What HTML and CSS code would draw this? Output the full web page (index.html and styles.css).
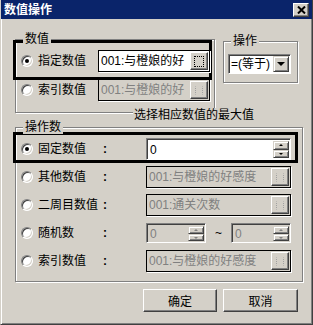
FILE: index.html
```html
<!DOCTYPE html>
<html lang="zh">
<head>
    <meta charset="UTF-8">
    <title>数值操作</title>
    <link rel="stylesheet" href="styles.css">
</head>
<body>
    <div class="window">
        <div class="titlebar">
            <span class="title">数值操作</span>
            <span class="close-btn">
                <svg width="9" height="8" viewBox="0 0 9 8"><path d="M1 0.5 L8 7.5 M8 0.5 L1 7.5" stroke="#000" stroke-width="2"/></svg>
            </span>
        </div>

        <div class="top-row">
            <!-- 数值 -->
            <div class="group group-value">
                <span class="group-label">数值</span>
                <div class="opt-row">
                    <span class="focus-frame frame-value"></span>
                    <span class="radio checked"></span>
                    <span class="opt-label">指定数值</span>
                    <div class="field picker">
                        <span class="field-text">001:与橙娘的好</span>
                        <span class="dots-btn"><span class="dots"></span></span>
                    </div>
                </div>
                <div class="opt-row">
                    <span class="radio"></span>
                    <span class="opt-label">索引数值</span>
                    <div class="field picker disabled">
                        <span class="field-text">001:与橙娘的好</span>
                        <span class="dots-btn"><span class="dots"></span></span>
                    </div>
                </div>
            </div>

            <!-- 操作 -->
            <div class="group group-op">
                <span class="group-label">操作</span>
                <div class="combo">
                    <span class="combo-text">=(等于)</span>
                    <span class="combo-btn"><span class="arrow-down"></span></span>
                </div>
            </div>
        </div>

        <div class="hint">选择相应数值的最大值</div>

        <!-- 操作数 -->
        <div class="group group-operand">
            <span class="group-label">操作数</span>
            <div class="opt-row">
                <span class="focus-frame frame-operand"></span>
                <span class="radio checked"></span>
                <span class="opt-label">固定数值</span>
                <span class="colon">:</span>
                <div class="spin wide">
                    <span class="spin-text">0</span>
                    <span class="spin-btns"><span class="spin-up"></span><span class="spin-down"></span></span>
                </div>
            </div>
            <div class="opt-row">
                <span class="radio"></span>
                <span class="opt-label">其他数值</span>
                <span class="colon">:</span>
                <div class="field picker disabled wide">
                    <span class="field-text">001:与橙娘的好感度</span>
                    <span class="dots-btn"><span class="dots"></span></span>
                </div>
            </div>
            <div class="opt-row">
                <span class="radio"></span>
                <span class="opt-label">二周目数值</span>
                <span class="colon">:</span>
                <div class="field picker disabled wide">
                    <span class="field-text">001:通关次数</span>
                    <span class="dots-btn"><span class="dots"></span></span>
                </div>
            </div>
            <div class="opt-row">
                <span class="radio"></span>
                <span class="opt-label">随机数</span>
                <span class="colon">:</span>
                <div class="spin small disabled">
                    <span class="spin-text">0</span>
                    <span class="spin-btns"><span class="spin-up"></span><span class="spin-down"></span></span>
                </div>
                <span class="tilde">~</span>
                <div class="spin small disabled">
                    <span class="spin-text">0</span>
                    <span class="spin-btns"><span class="spin-up"></span><span class="spin-down"></span></span>
                </div>
            </div>
            <div class="opt-row">
                <span class="radio"></span>
                <span class="opt-label">索引数值</span>
                <span class="colon">:</span>
                <div class="field picker disabled wide">
                    <span class="field-text">001:与橙娘的好感度</span>
                    <span class="dots-btn"><span class="dots"></span></span>
                </div>
            </div>
        </div>

        <div class="actions">
            <button type="button" class="btn btn-ok">确定</button>
            <button type="button" class="btn btn-cancel">取消</button>
        </div>
    </div>
</body>
</html>
```

FILE: styles.css
```css
body {
    margin: 0;
    padding: 0;
    background-color: #d4d0c8;
    font-family: "Liberation Sans", "Noto Sans CJK SC", sans-serif;
    font-size: 12px;
    color: #000;
}

.window {
    width: 313px;
    height: 325px;
    box-sizing: border-box;
    background-color: #d4d0c8;
    border-left: 1px solid #d4d0c8;
    border-right: 1px solid #404040;
    border-bottom: 1px solid #404040;
    box-shadow: inset 1px 0 #fff, inset -1px -1px #808080;
}

/* Title bar */
.titlebar {
    height: 19px;
    background-color: #0a246a;
    display: flex;
    align-items: center;
    justify-content: space-between;
    padding: 0 3px 0 3px;
}

.title {
    color: #fff;
    font-weight: bold;
    font-size: 12px;
    line-height: 14px;
}

.close-btn {
    width: 16px;
    height: 14px;
    box-sizing: border-box;
    background-color: #d4d0c8;
    border: 1px solid;
    border-color: #fff #404040 #404040 #fff;
    box-shadow: inset -1px -1px #808080;
    display: flex;
    align-items: center;
    justify-content: center;
}

/* Group boxes */
.group {
    position: relative;
    box-sizing: border-box;
    border: 1px solid #808080;
    box-shadow: inset 1px 1px #fff, 1px 1px #fff;
}

.group-label {
    position: absolute;
    top: -8px;
    left: 7px;
    padding: 0 2px;
    line-height: 14px;
    background-color: #d4d0c8;
    z-index: 2;
}

.top-row {
    display: flex;
    align-items: flex-start;
    margin-top: 20px;
    padding-left: 14px;
}

.group-value {
    width: 200px;
    height: 74px;
    padding: 10px 0 0 5px;
    display: flex;
    flex-direction: column;
    gap: 7px;
}

.group-op {
    width: 75px;
    height: 42px;
    margin: 2px 0 0 8px;
    padding: 12px 0 0 4px;
}

.hint {
    position: relative;
    z-index: 1;
    width: fit-content;
    margin: -5px 0 0 132px;
    padding: 0 1px;
    line-height: 14px;
    background-color: #d4d0c8;
}

.group-operand {
    width: 288px;
    height: 155px;
    margin: 5px 0 0 14px;
    padding: 10px 0 0 5px;
    display: flex;
    flex-direction: column;
    gap: 6px;
}

/* Option rows */
.opt-row {
    position: relative;
    display: flex;
    align-items: center;
    height: 22px;
}

.focus-frame {
    position: absolute;
    border: 3px solid #000;
    box-sizing: border-box;
    z-index: 1;
}

.frame-value {
    top: -10px;
    left: -8px;
    width: 199px;
    height: 40px;
}

.frame-operand {
    top: -6px;
    left: -8px;
    width: 285px;
    height: 31px;
}

.radio {
    position: relative;
    width: 12px;
    height: 12px;
    flex: 0 0 12px;
    box-sizing: border-box;
    border-radius: 50%;
    border: 1px solid;
    border-color: #808080 #fff #fff #808080;
    box-shadow: inset 1px 1px #404040, inset -1px -1px #d4d0c8;
    background-color: #fff;
    z-index: 2;
}

.radio.checked::after {
    content: "";
    position: absolute;
    left: 3px;
    top: 3px;
    width: 4px;
    height: 4px;
    border-radius: 50%;
    background-color: #000;
}

.opt-label {
    flex: 0 0 60px;
    margin-left: 5px;
    line-height: 14px;
    white-space: nowrap;
}

.colon {
    flex: 0 0 43px;
    padding-left: 5px;
    font-weight: bold;
    line-height: 14px;
}

/* Picker fields */
.field {
    position: relative;
    z-index: 2;
    box-sizing: border-box;
    height: 22px;
    width: 112px;
    border: 1px solid #000;
    box-shadow: 1px 1px #fff;
    background-color: #fff;
    display: flex;
    align-items: center;
    padding-left: 2px;
    overflow: hidden;
}

.field.wide {
    width: 145px;
}

.field.disabled {
    background-color: #d4d0c8;
    color: #808080;
}

.field-text {
    flex: 1;
    white-space: nowrap;
    overflow: hidden;
    line-height: 14px;
}

.dots-btn {
    flex: 0 0 18px;
    height: 18px;
    box-sizing: border-box;
    margin-right: 1px;
    background-color: #d4d0c8;
    border: 1px solid;
    border-color: #fff #404040 #404040 #fff;
    box-shadow: inset -1px -1px #808080;
    display: flex;
    align-items: center;
    justify-content: center;
}

.dots {
    width: 8px;
    height: 9px;
    border: 1px dotted #000;
}

.field.disabled .dots {
    border-color: #a0a0a0;
    border-style: dotted;
    width: 6px;
    height: 7px;
    border-top-color: transparent;
    border-bottom-color: transparent;
}

/* Combo box */
.combo {
    width: 63px;
    height: 20px;
    box-sizing: border-box;
    border: 1px solid;
    border-color: #808080 #fff #fff #808080;
    box-shadow: inset 1px 1px #404040;
    background-color: #fff;
    display: flex;
    align-items: center;
    padding: 1px 1px 1px 2px;
}

.combo-text {
    flex: 1;
    line-height: 14px;
    white-space: nowrap;
}

.combo-btn {
    flex: 0 0 16px;
    height: 16px;
    box-sizing: border-box;
    background-color: #d4d0c8;
    border: 1px solid;
    border-color: #d4d0c8 #404040 #404040 #d4d0c8;
    box-shadow: inset 1px 1px #fff, inset -1px -1px #808080;
    display: flex;
    align-items: center;
    justify-content: center;
}

.arrow-down {
    width: 0;
    height: 0;
    border-left: 4px solid transparent;
    border-right: 4px solid transparent;
    border-top: 4px solid #000;
}

/* Spin boxes */
.spin {
    position: relative;
    z-index: 2;
    box-sizing: border-box;
    height: 22px;
    border: 1px solid;
    border-color: #808080 #fff #fff #808080;
    box-shadow: inset 1px 1px #404040;
    background-color: #fff;
    display: flex;
    align-items: center;
    padding: 2px 1px 1px 3px;
}

.spin.wide {
    width: 145px;
}

.spin.small {
    width: 60px;
    height: 20px;
}

.spin.disabled {
    background-color: #d4d0c8;
    color: #808080;
}

.spin-text {
    flex: 1;
    line-height: 14px;
}

.spin-btns {
    flex: 0 0 16px;
    display: flex;
    flex-direction: column;
    height: 100%;
}

.spin-up,
.spin-down {
    flex: 1;
    position: relative;
    box-sizing: border-box;
    background-color: #d4d0c8;
    border: 1px solid;
    border-color: #d4d0c8 #404040 #404040 #d4d0c8;
    box-shadow: inset 1px 1px #fff, inset -1px -1px #808080;
}

.spin-up::after,
.spin-down::after {
    content: "";
    position: absolute;
    left: 5px;
    top: 2px;
    border-left: 2px solid transparent;
    border-right: 2px solid transparent;
}

.spin-up::after {
    border-bottom: 2px solid #000;
}

.spin-down::after {
    border-top: 2px solid #000;
}

.spin.disabled .spin-up::after {
    border-bottom-color: #808080;
}

.spin.disabled .spin-down::after {
    border-top-color: #808080;
}

.tilde {
    flex: 0 0 25px;
    text-align: center;
    line-height: 14px;
}

/* Buttons */
.actions {
    display: flex;
    gap: 6px;
    margin-top: 7px;
    padding-left: 142px;
}

.btn {
    height: 23px;
    padding: 0;
    font-family: "Liberation Sans", "Noto Sans CJK SC", sans-serif;
    font-size: 12px;
    color: #000;
    background-color: #d4d0c8;
    border: 1px solid;
    border-color: #fff #404040 #404040 #fff;
    box-shadow: inset -1px -1px #808080;
}

.btn-ok {
    width: 74px;
}

.btn-cancel {
    width: 75px;
}
```
